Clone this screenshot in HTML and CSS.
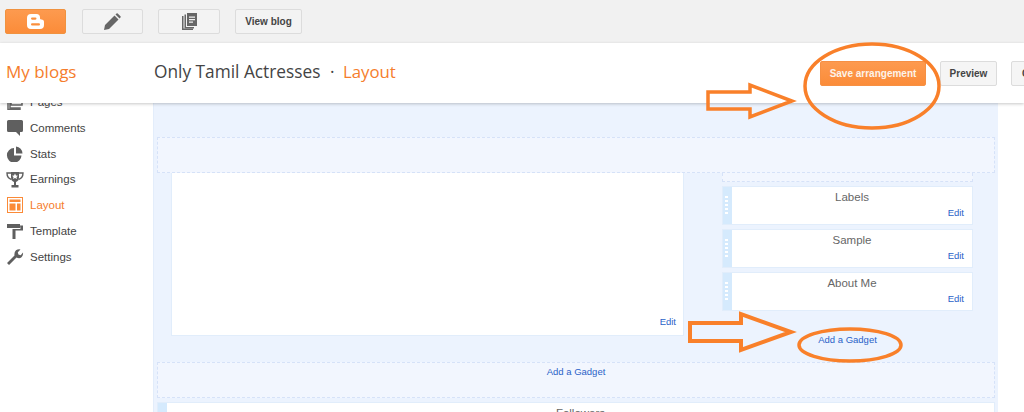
FILE: index.html
```html
<!DOCTYPE html>
<html lang="en">
<head>
<meta charset="utf-8">
<title>Only Tamil Actresses - Layout</title>
<link rel="stylesheet" href="styles.css">
</head>
<body>
<div class="page">
  <div class="topbar">
    <button class="tb-btn tb-logo">
      <svg width="17" height="15" viewBox="0 0 17 15"><path d="M4 0h5.500Q13 0 13 3.500v1Q13 5.500 14.500 5.500 17 5.500 17 8v3q0 4-4 4H4q-4 0-4-4V4q0-4 4-4z" fill="#fff"/><rect x="4" y="3.500" width="5.500" height="2.200" rx="1.100" fill="#fb8f3d"/><rect x="4" y="9.300" width="9" height="2.200" rx="1.100" fill="#fb8f3d"/></svg>
    </button>
    <button class="tb-btn tb-icon">
      <svg width="17" height="17" viewBox="0 0 17 17"><path d="M0 17l1-5L10.500 2.500l4 4L5 16z M11.500 1.500l1-1q.6-.5 1.200 0l2.800 2.800q.5.600 0 1.200l-1 1z" fill="#666"/></svg>
    </button>
    <button class="tb-btn tb-icon tb-pages">
      <svg width="15" height="17" viewBox="0 0 15 17"><path d="M0 3h1.500v12.500H11V17H0z" fill="#666"/><path d="M2.500 1.500H4V14h8v1.500H2.500z" fill="#666"/><path d="M5 0h10v13H5z" fill="#666"/><path d="M7 3.500h6v1.200H7zM7 6h6v1.200H7zM7 8.500h4v1.200H7z" fill="#f1f1f1"/></svg>
    </button>
    <button class="tb-btn tb-view">View blog</button>
  </div>

  <header class="head">
    <div class="head-brand">My blogs</div>
    <div class="head-title">Only Tamil Actresses <span class="head-dot">·</span> <span class="head-sec">Layout</span></div>
    <div class="head-actions">
      <button class="act act-save">Save arrangement</button>
      <button class="act act-preview">Preview</button>
      <button class="act act-close">Close</button>
    </div>
  </header>

  <div class="body">
    <nav class="side">
      <a class="nav">
        <svg class="nav-ic" width="16" height="16" viewBox="0 0 16 16"><path d="M4 1h11v10H4z M1 4h2v10h10v1.500H1z" fill="none" stroke="#666" stroke-width="1.500"/></svg>
        Pages</a>
      <a class="nav">
        <svg class="nav-ic" width="16" height="16" viewBox="0 0 16 16"><path d="M1.500 0h13Q16 0 16 1.500v9q0 1.500-1.500 1.500H13v4l-4-4H1.500Q0 12 0 10.500v-9Q0 0 1.500 0z" fill="#5f5f5f"/></svg>
        Comments</a>
      <a class="nav">
        <svg class="nav-ic" width="16" height="16" viewBox="0 0 16 16"><path d="M7 2v7.500h7.500A7.300 7.300 0 1 1 7 2z M9 0.500a7 7 0 0 1 6.500 7H9z" fill="#5f5f5f"/></svg>
        Stats</a>
      <a class="nav">
        <svg class="nav-ic" width="18" height="17" viewBox="0 0 18 17"><path d="M5 1h8v5q0 4-3 5v3h2.500v2.500h-7V14H8v-3Q5 10 5 6z" fill="#5f5f5f"/><path d="M5 2H1q0 5 4.500 6.500M13 2h4q0 5-4.500 6.500" fill="none" stroke="#5f5f5f" stroke-width="1.400"/><path d="M9 2.500l1 2 2 .2-1.500 1.400.4 2L9 7l-1.900 1.100.4-2L6 4.700l2-.2z" fill="#fff"/></svg>
        Earnings</a>
      <a class="nav nav-on">
        <svg class="nav-ic" width="16" height="16" viewBox="0 0 16 16"><rect x=".5" y=".5" width="15" height="15" fill="#fff" stroke="#fb8a37"/><path d="M2.500 2.500h11v2.500h-11zM2.500 6.500h6v7h-6zM10 6.500h3.500v7H10z" fill="#fb8a37"/></svg>
        Layout</a>
      <a class="nav">
        <svg class="nav-ic" width="16" height="16" viewBox="0 0 16 16"><path d="M0 1h13v4H0z" fill="#5f5f5f"/><path d="M13 2.500h3v5H8.500V16H5.500V6h8z" fill="#5f5f5f"/></svg>
        Template</a>
      <a class="nav">
        <svg class="nav-ic" width="16" height="16" viewBox="0 0 16 16"><path d="M0 14l7.500-7.500Q7 3 9 1.300 11 0 13.500 0.500L10.800 3.300l.6 2.300 2.300.6L16 3.500q.4 2.700-1.500 4.700Q12.500 10 9.500 8.500L2 16z" fill="#5f5f5f"/></svg>
        Settings</a>
    </nav>

    <main class="canvas">
      <div class="band"></div>
      <div class="cols">
        <section class="post-col">
          <div class="post-box"><a class="edit">Edit</a></div>
        </section>
        <aside class="gadgets">
          <div class="stub"></div>
          <div class="widget"><div class="handle"></div><div class="w-body"><div class="w-name">Labels</div><a class="edit">Edit</a></div></div>
          <div class="widget"><div class="handle"></div><div class="w-body"><div class="w-name">Sample</div><a class="edit">Edit</a></div></div>
          <div class="widget"><div class="handle"></div><div class="w-body"><div class="w-name">About Me</div><a class="edit">Edit</a></div></div>
          <a class="add add-side">Add a Gadget</a>
        </aside>
      </div>
      <div class="band band-add"><a class="add">Add a Gadget</a></div>
      <div class="widget widget-wide"><div class="handle"></div><div class="w-body"><div class="w-name">Followers</div></div></div>
    </main>
  </div>

  <svg class="marks" width="1024" height="412" viewBox="0 0 1024 412">
    <g fill="none" stroke="#f9802a" stroke-linejoin="miter">
      <path stroke-width="3.500" d="M708 92H750V85L792 101L750 117V109H708Z"/>
      <ellipse stroke-width="3.500" cx="872" cy="86" rx="67" ry="42"/>
      <path stroke-width="4" d="M690 323H741V314L791 332L741 350V341H690Z"/>
      <ellipse stroke-width="3.500" cx="850" cy="345" rx="51" ry="16"/>
    </g>
  </svg>
</div>
</body>
</html>
```
FILE: styles.css
```css
* { box-sizing: border-box; }
html, body { margin: 0; padding: 0; }
body { font-family: "Liberation Sans", Arial, sans-serif; background: #fff; color: #444; }
.page { position: relative; width: 1024px; height: 412px; overflow: hidden; display: flex; flex-direction: column; }

.topbar { height: 43px; flex: none; background: #f1f1f1; display: flex; align-items: flex-start; padding: 9px 0 0 5px; gap: 15px; }
.tb-btn { height: 25px; padding: 0; display: flex; align-items: center; justify-content: center; background: #f3f3f3; border: 1px solid #dcdcdc; border-radius: 2px; font-family: inherit; }
.tb-logo { width: 61px; margin-right: 1px; background: linear-gradient(#fd9a4f, #fb8c39); border-color: #f0923f; }
.tb-icon { width: 61px; }
.tb-pages { width: 62px; }
.tb-view { width: 67px; font-size: 10px; font-weight: bold; color: #444; }

.head { height: 60px; flex: none; position: relative; z-index: 2; background: #fff; display: flex; align-items: center; box-shadow: 0 1px 3px rgba(0, 0, 0, .22); }
.head-brand { width: 154px; flex: none; padding: 0 0 3px 6px; font-family: "Open Sans", sans-serif; font-size: 17px; color: #f57d2c; }
.head-title { flex: 1; padding-bottom: 3px; font-family: "Open Sans", sans-serif; font-size: 17.300px; color: #444; white-space: nowrap; }
.head-dot { margin: 0 4px 0 5px; }
.head-sec { color: #f57d2c; font-size: 16.800px; }
.head-actions { flex: none; width: 204px; display: flex; gap: 14px; align-items: center; }
.act { flex: none; height: 25px; padding: 0 10px; background: #f5f5f5; border: 1px solid #dcdcdc; border-radius: 2px; font-family: inherit; font-size: 10px; font-weight: bold; color: #444; white-space: nowrap; }
.act-save { width: 106px; padding: 0; background: linear-gradient(#fd9a4f, #fb8c39); border-color: #f69044; color: #fdf3e9; }
.act-preview { width: 57px; padding: 0; }

.body { flex: 1; display: flex; margin-top: -14px; min-height: 0; }
.side { width: 153px; flex: none; display: flex; flex-direction: column; }
.nav { height: 25.850px; flex: none; display: flex; align-items: center; font-size: 11.500px; color: #444; padding-left: 6px; }
.nav-ic { width: 18px; margin-right: 6px; flex: none; }
.nav-on { color: #f57d2c; }

.canvas { width: 845px; flex: none; padding: 48px 3px 0 3px; background: #ecf3fe; border-left: 1px solid #e3edfb; }
.band { height: 36px; background: #f2f6fe; border: 1px dashed #d6e2f8; }
.cols { height: 189px; display: flex; justify-content: space-between; padding: 0 22px 0 14px; }
.post-col { width: 513px; }
.post-box { height: 163px; background: #fff; border: 1px solid #e1edfb; border-top: 0; display: flex; flex-direction: column; justify-content: flex-end; }
.post-box .edit { padding: 0 7px 7px 0; }
.gadgets { width: 251px; display: flex; flex-direction: column; }
.stub { height: 9px; background: #f2f6fe; border: 1px dashed #d6e2f8; border-top: 0; margin-bottom: 4px; }
.widget { height: 39px; margin-bottom: 4px; display: flex; border: 1px solid #e1edfb; background: #fff; }
.handle { width: 9px; flex: none; background: #d5eafd; display: flex; align-items: center; justify-content: center; }
.handle::before { content: ""; width: 3px; height: 19px; background: repeating-linear-gradient(#fff 0 2px, transparent 2px 4px); margin-right: 3px; }
.w-body { flex: 1; display: flex; flex-direction: column; }
.w-name { text-align: center; font-size: 11.500px; line-height: 14px; color: #666; padding-top: 3px; }
.edit { display: block; text-align: right; font-size: 9.500px; line-height: 12px; color: #2a62c8; padding: 3px 8px 0 0; }
.add { display: block; text-align: center; font-size: 9.500px; line-height: 12px; color: #2a62c8; }
.add-side { padding-top: 19px; }
.band-add { padding-top: 3px; }
.widget-wide { margin-top: 4px; }

.marks { position: absolute; left: 0; top: 0; z-index: 3; pointer-events: none; }
```
